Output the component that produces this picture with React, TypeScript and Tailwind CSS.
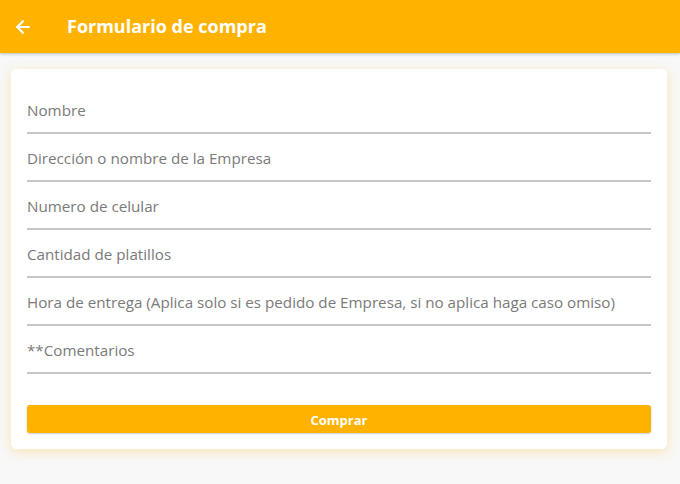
import { ArrowLeft } from "lucide-react"

const fields = [
  "Nombre",
  "Dirección o nombre de la Empresa",
  "Numero de celular",
  "Cantidad de platillos",
  "Hora de entrega (Aplica solo si es pedido de Empresa, si no aplica haga caso omiso)",
  "**Comentarios",
]

export default function App() {
  return (
    <div
      className="min-h-[484px] bg-[#f8f8f8]"
      style={{ fontFamily: '"Open Sans", "Noto Sans", sans-serif' }}
    >
      <header className="flex h-[53px] items-center bg-[#ffb300] shadow-[0_1px_3px_rgba(0,0,0,0.25)]">
        <button
          aria-label="Volver"
          className="ml-[13px] flex size-5 items-center justify-center text-white"
          type="button"
        >
          <ArrowLeft className="size-5" strokeWidth={2.5} />
        </button>
        <h1 className="ml-[34px] text-[18px] font-bold text-white">
          Formulario de compra
        </h1>
      </header>

      <main className="pt-4 pr-[13px] pl-[11px]">
        <form
          className="rounded-[5px] bg-white px-4 pt-[17px] pb-4 shadow-[0_3px_12px_rgba(255,179,0,0.28)]"
          onSubmit={(event) => event.preventDefault()}
        >
          {fields.map((label) => (
            <input
              aria-label={label}
              className="block h-12 w-full border-b-2 border-[#c8c8c8] bg-transparent pt-0.5 text-[15.2px] text-[#555] outline-none placeholder:text-[#7a7a7a]"
              key={label}
              placeholder={label}
              type="text"
            />
          ))}
          <button
            className="mt-[31px] block h-7 w-full rounded-[3px] bg-[#ffb300] pt-[3px] text-[13px] font-bold text-white shadow-[0_1px_2px_rgba(0,0,0,0.2)]"
            type="submit"
          >
            Comprar
          </button>
        </form>
      </main>
    </div>
  )
}
